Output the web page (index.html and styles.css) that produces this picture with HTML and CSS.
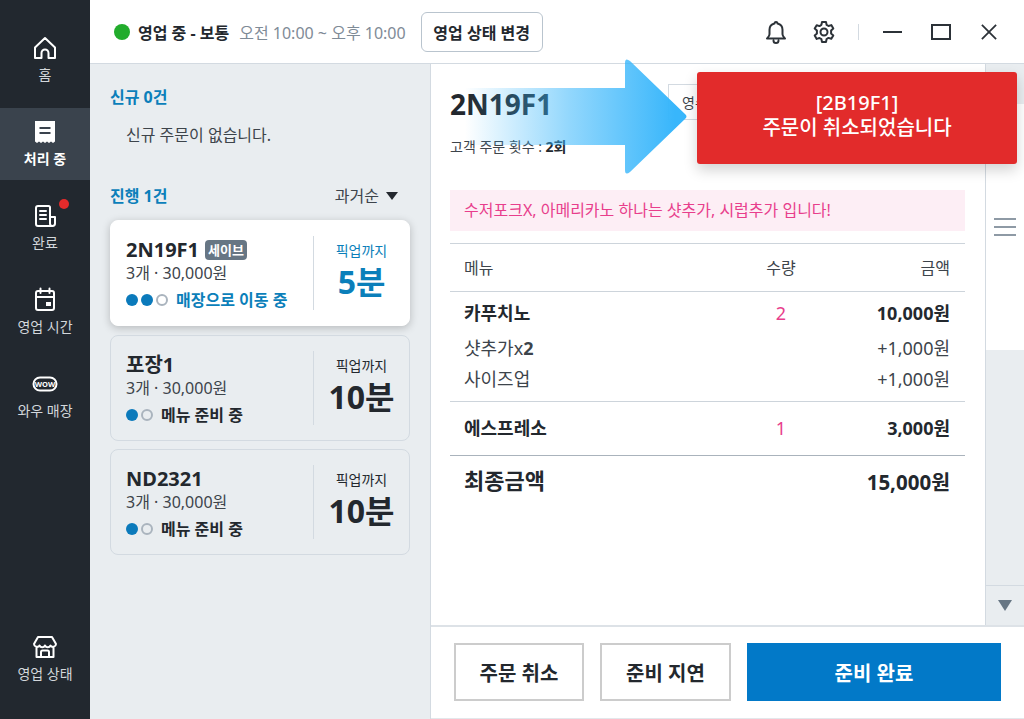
FILE: index.html
```html
<!DOCTYPE html>
<html lang="ko">
<head>
    <meta charset="UTF-8">
    <title>주문 관리</title>
    <link rel="stylesheet" href="styles.css">
</head>
<body>
    <div class="app">
        <nav class="sidebar">
            <a class="nav-item">
                <svg class="nav-icon" viewBox="0 0 26 26"><path d="M3 12.500 13 3l10 9.500V23h-6.500v-5a3.500 3.500 0 0 0-7 0v5H3z"/></svg>
                <span>홈</span>
            </a>
            <a class="nav-item nav-active">
                <svg class="nav-icon" viewBox="0 0 26 26"><path class="solid" fill-rule="evenodd" d="M3 2h20v20.500l-2 1.500-2-1.500-2 1.500-2-1.500-2 1.500-2-1.500-2 1.500-2-1.500-2 1.500-2-1.500zM7.500 8v2h11V8zM7.500 13v2h11v-2z"/></svg>
                <span>처리 중</span>
            </a>
            <a class="nav-item">
                <svg class="nav-icon" viewBox="0 0 26 26"><path d="M18 14h5v6.500a2.500 2.500 0 0 1-5 0V4.500A1.500 1.500 0 0 0 16.500 3H6a2 2 0 0 0-2 2v16a2 2 0 0 0 2 2h14.500M8 8h6M8 12h6M8 16h6"/></svg>
                <span>완료</span>
                <i class="nav-badge"></i>
            </a>
            <a class="nav-item">
                <svg class="nav-icon" viewBox="0 0 26 26"><path d="M6 4h14a2 2 0 0 1 2 2v15a2 2 0 0 1-2 2H6a2 2 0 0 1-2-2V6a2 2 0 0 1 2-2zM4 10h18M8.500 1.500V6M17.500 1.500V6"/><rect class="solid" x="14" y="15" width="5" height="4"/></svg>
                <span>영업 시간</span>
            </a>
            <a class="nav-item">
                <svg class="nav-icon" viewBox="0 0 26 26"><rect x="1.500" y="6.500" width="23" height="13" rx="6.500"/><text class="wow" x="13" y="15.800" text-anchor="middle">WOW</text></svg>
                <span>와우 매장</span>
            </a>
            <a class="nav-item nav-bottom">
                <svg class="nav-icon" viewBox="0 0 26 26"><path d="M6 3h14l4 7a3 3 0 0 1-5.500 1.500 3 3 0 0 1-5.500 0 3 3 0 0 1-5.500 0A3 3 0 0 1 2 10zM4.500 14v9h17v-9M9 23v-5a1.500 1.500 0 0 1 1.500-1.500h5A1.500 1.500 0 0 1 17 18v5"/></svg>
                <span>영업 상태</span>
            </a>
        </nav>

        <div class="main">
            <header class="topbar">
                <i class="status-dot"></i>
                <strong class="status-text">영업 중 - 보통</strong>
                <span class="status-hours">오전 10:00 ~ 오후 10:00</span>
                <button class="status-btn">영업 상태 변경</button>
                <div class="top-icons">
                    <svg class="top-icon icon-bell" viewBox="0 0 24 24"><path d="M12 2a1.500 1.500 0 0 1 1.500 1.500 6.500 6.500 0 0 1 5 6.300v4.400c0 1.800 1.300 3 2.500 4.300H3c1.200-1.300 2.500-2.500 2.500-4.300V9.800a6.500 6.500 0 0 1 5-6.300A1.500 1.500 0 0 1 12 2zM9.500 20.500a2.500 2.500 0 0 0 5 0"/></svg>
                    <svg class="top-icon icon-gear" viewBox="0 0 24 24"><circle cx="12" cy="12" r="3.500"/><path d="M10 2h4l.6 2.900 1.900 1.100 2.800-.9 2 3.400-2.200 2v2.900l2.200 2-2 3.400-2.800-.9-1.900 1.100L14 22h-4l-.6-2.900-1.900-1.100-2.800.9-2-3.400 2.200-2v-2.900l-2.200-2 2-3.400 2.800.9L9.400 4.900z"/></svg>
                    <i class="top-sep"></i>
                    <i class="win-min"></i>
                    <i class="win-max"></i>
                    <svg class="win-close" viewBox="0 0 18 18"><path d="M1 1l16 16M17 1 1 17"/></svg>
                </div>
            </header>

            <div class="content">
                <section class="list">
                    <h2 class="list-title">신규 0건</h2>
                    <p class="list-empty">신규 주문이 없습니다.</p>
                    <div class="list-head">
                        <h2 class="list-title">진행 1건</h2>
                        <span class="sort">과거순<i class="sort-arrow"></i></span>
                    </div>
                    <div class="cards">
                        <article class="card card-active">
                            <div class="card-info">
                                <div class="card-title">2N19F1<span class="tag">세이브</span></div>
                                <div class="card-sub">3개 · 30,000원</div>
                                <div class="card-status">
                                    <i class="dot on"></i><i class="dot on"></i><i class="dot"></i>
                                    <b>매장으로 이동 중</b>
                                </div>
                            </div>
                            <div class="card-time">
                                <span>픽업까지</span>
                                <strong>5분</strong>
                            </div>
                        </article>
                        <article class="card">
                            <div class="card-info">
                                <div class="card-title">포장1</div>
                                <div class="card-sub">3개 · 30,000원</div>
                                <div class="card-status">
                                    <i class="dot on"></i><i class="dot"></i>
                                    <b>메뉴 준비 중</b>
                                </div>
                            </div>
                            <div class="card-time">
                                <span>픽업까지</span>
                                <strong>10분</strong>
                            </div>
                        </article>
                        <article class="card">
                            <div class="card-info">
                                <div class="card-title">ND2321</div>
                                <div class="card-sub">3개 · 30,000원</div>
                                <div class="card-status">
                                    <i class="dot on"></i><i class="dot"></i>
                                    <b>메뉴 준비 중</b>
                                </div>
                            </div>
                            <div class="card-time">
                                <span>픽업까지</span>
                                <strong>10분</strong>
                            </div>
                        </article>
                    </div>
                </section>

                <section class="order">
                    <div class="order-top">
                        <div class="detail">
                            <div class="detail-head">
                                <div>
                                    <h1 class="order-no">2N19F1</h1>
                                    <p class="order-count">고객 주문 횟수 : <b>2회</b></p>
                                </div>
                                <button class="print-btn">영수증 출력</button>
                            </div>
                            <div class="note">수저포크X, 아메리카노 하나는 샷추가, 시럽추가 입니다!</div>
                            <div class="table">
                                <div class="row row-head"><span>메뉴</span><span class="qty-head">수량</span><span class="price">금액</span></div>
                                <div class="group group-first">
                                    <div class="row row-item"><span>카푸치노</span><span class="qty">2</span><span class="price">10,000원</span></div>
                                    <div class="row row-opt opt-first"><span>샷추가x<b>2</b></span><span></span><span class="price">+1,000원</span></div>
                                    <div class="row row-opt opt-second"><span>사이즈업</span><span></span><span class="price">+1,000원</span></div>
                                </div>
                                <div class="group group-second">
                                    <div class="row row-item"><span>에스프레소</span><span class="qty">1</span><span class="price">3,000원</span></div>
                                </div>
                                <div class="row row-total"><span>최종금액</span><span></span><span class="price">15,000원</span></div>
                            </div>
                        </div>
                        <div class="scroll">
                            <div class="scroll-track"></div>
                            <div class="scroll-thumb"><i></i><i></i><i></i></div>
                            <div class="scroll-fill"></div>
                            <div class="scroll-down"><i></i></div>
                        </div>
                    </div>
                    <footer class="actions">
                        <button class="btn btn-cancel">주문 취소</button>
                        <button class="btn btn-delay">준비 지연</button>
                        <button class="btn btn-done">준비 완료</button>
                    </footer>
                </section>
            </div>
        </div>

        <svg class="pointer" viewBox="0 0 230 125">
            <defs>
                <linearGradient id="pointerFill" gradientUnits="userSpaceOnUse" x1="5" y1="0" x2="215" y2="0">
                    <stop offset="0" stop-color="#38b6fb" stop-opacity="0"/>
                    <stop offset="0.5" stop-color="#38b6fb" stop-opacity="0.55"/>
                    <stop offset="1" stop-color="#38b6fb"/>
                </linearGradient>
            </defs>
            <path fill="url(#pointerFill)" d="M5 33H165V8Q165 2 170 6L225 59Q228 61.500 225 64L170 117Q165 121 165 115V90H5Z"/>
        </svg>

        <div class="toast">[2B19F1]<br>주문이 취소되었습니다</div>
    </div>
</body>
</html>
```

FILE: styles.css
```css
* {
    box-sizing: border-box;
}
html, body {
    margin: 0;
    height: 100%;
    overflow: hidden;
}
body {
    font-family: "Noto Sans", "Noto Sans CJK KR", sans-serif;
    color: #23282e;
    background: #fff;
}
h1, h2, p {
    margin: 0;
}
button {
    font-family: inherit;
    background: #fff;
    color: #23282e;
    cursor: pointer;
}
.app {
    position: relative;
    display: flex;
    width: 1024px;
    height: 719px;
    overflow: hidden;
}

/* sidebar */
.sidebar {
    width: 90px;
    flex: none;
    background: #22282f;
    display: flex;
    flex-direction: column;
    gap: 12px;
    padding: 24px 0;
}
.nav-item {
    position: relative;
    height: 72px;
    padding-top: 11px;
    display: flex;
    flex-direction: column;
    align-items: center;
    color: #d3d7db;
    font-size: 14px;
    line-height: 20px;
}
.nav-icon {
    width: 26px;
    height: 26px;
    margin-bottom: 4px;
    fill: none;
    stroke: #fff;
    stroke-width: 2;
    stroke-linejoin: round;
    stroke-linecap: round;
}
.nav-icon .solid {
    fill: #fff;
    stroke: none;
}
.wow {
    font-size: 7.500px;
    font-weight: 700;
    fill: #fff;
    stroke: none;
}
.nav-active {
    background: #3a434d;
    color: #fff;
    font-weight: 700;
}
.nav-bottom {
    margin-top: auto;
}
.nav-badge {
    position: absolute;
    top: 7px;
    left: 59px;
    width: 10px;
    height: 10px;
    border-radius: 50%;
    background: #e32b2b;
}

/* top bar */
.main {
    flex: 1;
    min-width: 0;
    display: flex;
    flex-direction: column;
}
.topbar {
    height: 64px;
    flex: none;
    display: flex;
    align-items: center;
    padding-left: 24px;
    border-bottom: 1px solid #d3dae1;
}
.status-dot {
    width: 16px;
    height: 16px;
    border-radius: 50%;
    background: #22ac2c;
    margin-right: 8px;
}
.status-text {
    font-size: 16px;
    margin-right: 10px;
}
.status-hours {
    font-size: 16px;
    color: #7f8b97;
    margin-right: 15px;
}
.status-btn {
    height: 40px;
    width: 122px;
    padding: 0;
    font-size: 16px;
    font-weight: 700;
    border: 1px solid #b9c4ce;
    border-radius: 6px;
}
.top-icons {
    margin-left: auto;
    display: flex;
    align-items: center;
    padding-right: 27px;
}
.top-icon {
    width: 24px;
    height: 24px;
    fill: none;
    stroke: #2c3238;
    stroke-width: 2;
    stroke-linejoin: round;
    stroke-linecap: round;
}
.icon-bell {
    margin-right: 24px;
}
.top-sep {
    width: 1px;
    height: 16px;
    background: #d3dae1;
    margin: 0 24px 0 22px;
}
.win-min {
    width: 19px;
    height: 2px;
    background: #2c3238;
    margin-right: 29px;
}
.win-max {
    width: 20px;
    height: 16px;
    border: 2px solid #2c3238;
    margin-right: 30px;
}
.win-close {
    width: 16px;
    height: 16px;
    fill: none;
    stroke: #2c3238;
    stroke-width: 2;
}

/* order list */
.content {
    flex: 1;
    min-height: 0;
    display: flex;
}
.list {
    width: 341px;
    flex: none;
    background: #e9edf0;
    border-right: 1px solid #d3dae1;
    padding: 22px 20px 0;
}
.list-title {
    font-size: 16px;
    line-height: 22px;
    font-weight: 700;
    color: #0b7fba;
}
.list-empty {
    margin-top: 16px;
    padding-left: 16px;
    font-size: 16px;
    line-height: 22px;
    color: #3d444b;
}
.list-head {
    margin-top: 39px;
    display: flex;
    justify-content: space-between;
    align-items: center;
}
.sort {
    display: flex;
    align-items: center;
    font-size: 16px;
    line-height: 22px;
    color: #3d444b;
    padding-right: 12px;
}
.sort-arrow {
    margin-left: 7px;
    border-left: 6px solid transparent;
    border-right: 6px solid transparent;
    border-top: 8px solid #23282e;
}
.cards {
    margin-top: 13px;
    display: flex;
    flex-direction: column;
    gap: 8px;
}
.card {
    height: 106px;
    padding: 15px 0 15px 15px;
    display: flex;
    border: 1px solid #d3dae1;
    border-radius: 8px;
}
.card-active {
    background: #fff;
    border-color: #fff;
    margin-bottom: 1px;
    box-shadow: 0 2px 8px rgba(0, 0, 0, 0.22);
}
.card-info {
    flex: 1;
    min-width: 0;
}
.card-title {
    display: flex;
    align-items: center;
    font-size: 20px;
    line-height: 27px;
    font-weight: 700;
}
.tag {
    margin-left: 6px;
    width: 42px;
    height: 20px;
    border-radius: 4px;
    background: #677684;
    color: #fff;
    font-size: 13px;
    line-height: 20px;
    text-align: center;
}
.card-sub {
    font-size: 16px;
    line-height: 21px;
    color: #3d444b;
}
.card-status {
    margin-top: 5px;
    display: flex;
    align-items: center;
    gap: 3px;
    font-size: 16px;
    line-height: 22px;
}
.card-status b {
    margin-left: 5px;
}
.card-active .card-status b,
.card-active .card-time {
    color: #0b7fba;
}
.dot {
    width: 12px;
    height: 12px;
    border-radius: 50%;
    border: 2px solid #aab4be;
}
.dot.on {
    border: none;
    background: #0b7abb;
}
.card-time {
    width: 96px;
    flex: none;
    border-left: 1px solid #d3dae1;
    display: flex;
    flex-direction: column;
    align-items: center;
    padding-top: 5px;
}
.card-time span {
    font-size: 14px;
    line-height: 20px;
}
.card-time strong {
    font-size: 32px;
    line-height: 42px;
}

/* order detail */
.order {
    flex: 1;
    min-width: 0;
    display: flex;
    flex-direction: column;
}
.order-top {
    flex: 1;
    min-height: 0;
    display: flex;
}
.detail {
    flex: 1;
    min-width: 0;
    padding: 20px 20px 0 19px;
}
.detail-head {
    display: flex;
    justify-content: space-between;
    align-items: flex-start;
}
.order-no {
    margin-top: 3px;
    font-size: 28px;
    line-height: 34px;
    font-weight: 700;
}
.order-count {
    margin-top: 16px;
    font-size: 14px;
    line-height: 20px;
    color: #3d444b;
}
.order-count b {
    color: #23282e;
}
.print-btn {
    width: 297px;
    height: 36px;
    padding: 0 0 0 13px;
    text-align: left;
    font-size: 14px;
    color: #3d444b;
    border: 1px solid #d3dae1;
}
.note {
    margin-top: 33px;
    height: 41px;
    padding-left: 14px;
    background: #fdeef5;
    color: #e83e8c;
    font-size: 16px;
    line-height: 41px;
}
.table {
    margin-top: 12px;
    border-top: 1px solid #cdd4db;
}
.row {
    display: grid;
    grid-template-columns: 1fr 100px 119px;
    padding: 0 15px 0 14px;
    line-height: 22px;
}
.row-head {
    padding-top: 13px;
    padding-bottom: 12px;
    font-size: 16px;
    color: #3d444b;
    border-bottom: 1px solid #cdd4db;
}
.qty-head, .qty {
    text-align: center;
}
.qty {
    color: #e83e8c;
    font-weight: 400;
}
.price {
    text-align: right;
}
.group {
    border-bottom: 1px solid #cdd4db;
}
.group-first {
    padding: 10px 0 11px;
}
.group-second {
    padding: 15px 0 16px;
    border-bottom-color: #aab3bc;
}
.row-item {
    font-size: 18px;
    font-weight: 700;
}
.row-opt {
    font-size: 18px;
    color: #3d444b;
}
.opt-first {
    margin-top: 13px;
}
.opt-second {
    margin-top: 9px;
}
.row-total {
    margin-top: 8px;
    font-size: 22px;
    line-height: 28px;
    font-weight: 700;
    align-items: center;
}
.row-total .price {
    font-size: 20.500px;
    padding-top: 4px;
}

/* scroll column */
.scroll {
    width: 39px;
    flex: none;
    display: flex;
    flex-direction: column;
    background: #e9edf0;
    border-left: 1px solid #d3dae1;
}
.scroll-track {
    height: 40px;
}
.scroll-thumb {
    height: 246px;
    background: #fff;
    display: flex;
    flex-direction: column;
    justify-content: center;
    align-items: center;
    gap: 6px;
}
.scroll-thumb i {
    width: 22px;
    height: 2px;
    background: #8e9aa5;
}
.scroll-fill {
    flex: 1;
}
.scroll-down {
    height: 40px;
    border-top: 1px solid #d3dae1;
    display: flex;
    justify-content: center;
    align-items: center;
}
.scroll-down i {
    border-left: 7px solid transparent;
    border-right: 7px solid transparent;
    border-top: 11px solid #677684;
}

/* bottom buttons */
.actions {
    height: 94px;
    flex: none;
    display: flex;
    gap: 16px;
    padding: 16px 23px 0;
    border-top: 2px solid #dde2e7;
    border-bottom: 1px solid #e3e7eb;
}
.btn {
    width: 131px;
    height: 58px;
    padding: 0;
    font-size: 20px;
    font-weight: 700;
    border: 2px solid #ccc;
}
.btn-cancel {
    width: 130px;
}
.btn-done {
    flex: 1;
    background: #0279c8;
    border: none;
    color: #fff;
}

/* overlays */
.pointer {
    position: absolute;
    left: 460px;
    top: 55px;
    width: 230px;
    height: 125px;
}
.toast {
    position: absolute;
    left: 697px;
    top: 72px;
    width: 320px;
    height: 92px;
    padding-top: 18px;
    border-radius: 3px;
    background: #e22b2b;
    color: #fff;
    font-size: 20px;
    font-weight: 500;
    line-height: 25px;
    text-align: center;
    box-shadow: 0 6px 14px rgba(0, 0, 0, 0.18);
}
```
